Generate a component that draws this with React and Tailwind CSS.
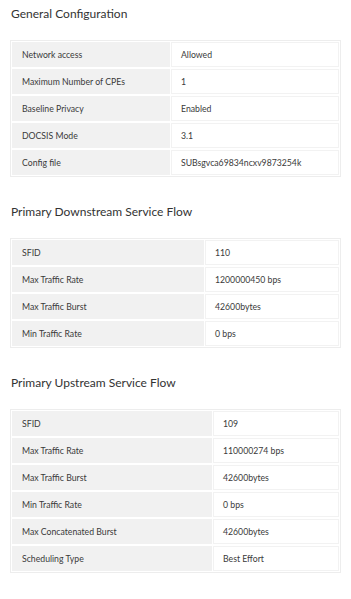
const sections = [
  {
    title: "General Configuration",
    labelWidth: "w-[158px]",
    rows: [
      ["Network access", "Allowed"],
      ["Maximum Number of CPEs", "1"],
      ["Baseline Privacy", "Enabled"],
      ["DOCSIS Mode", "3.1"],
      ["Config file", "SUBsgvca69834ncxv9873254k"],
    ],
  },
  {
    title: "Primary Downstream Service Flow",
    labelWidth: "w-[192px]",
    rows: [
      ["SFID", "110"],
      ["Max Traffic Rate", "1200000450 bps"],
      ["Max Traffic Burst", "42600bytes"],
      ["Min Traffic Rate", "0 bps"],
    ],
  },
  {
    title: "Primary Upstream Service Flow",
    labelWidth: "w-[200px]",
    rows: [
      ["SFID", "109"],
      ["Max Traffic Rate", "110000274 bps"],
      ["Max Traffic Burst", "42600bytes"],
      ["Min Traffic Rate", "0 bps"],
      ["Max Concatenated Burst", "42600bytes"],
      ["Scheduling Type", "Best Effort"],
    ],
  },
];

function InfoTable({ rows, labelWidth }) {
  return (
    <div className="mx-[10px] border border-[#ededed] bg-white p-px flex flex-col gap-[2px]">
      {rows.map(([label, value]) => (
        <div key={label} className="flex gap-px h-[25px]">
          <div
            className={`${labelWidth} shrink-0 bg-[#f1f1f1] flex items-center pl-[10px] text-[8.7px] text-[#3a3a3a]`}
          >
            {label}
          </div>
          <div className="flex-1 bg-white border border-[#f2f2f2] flex items-center pl-[9px] text-[8.7px] text-[#3a3a3a]">
            {value}
          </div>
        </div>
      ))}
    </div>
  );
}

export default function App() {
  return (
    <div
      className="w-[351px] min-h-[599px] bg-white pt-[6px]"
      style={{ fontFamily: "Lato, 'Liberation Sans', sans-serif" }}
    >
      {sections.map((s, i) => (
        <section key={s.title} className={i === 0 ? "" : "mt-[27px]"}>
          <h2 className="px-[11px] text-[12px] leading-[16px] text-[#333] mb-[18px]">
            {s.title}
          </h2>
          <InfoTable rows={s.rows} labelWidth={s.labelWidth} />
        </section>
      ))}
    </div>
  );
}
